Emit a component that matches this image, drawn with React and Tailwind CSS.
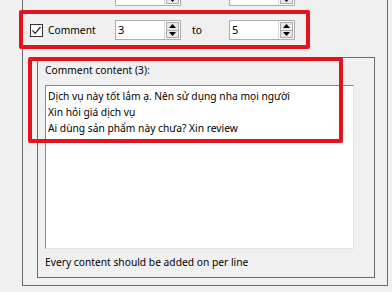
import React from "react";

function Spin({ value }) {
  return (
    <div className="flex h-[20px] w-[66px] border border-[#abadb3] bg-white">
      <div className="flex-1 pl-[2px] text-[11px] leading-[18px] text-black">{value}</div>
      <div className="flex w-[16px] flex-col border-l border-[#d9d9d9] p-[1px]">
        <div className="flex flex-1 items-center justify-center border border-[#acacac] bg-[#e9e9e9]">
          <svg width="7" height="4" viewBox="0 0 7 4"><path d="M3.5 0 L7 4 L0 4 Z" fill="#000" /></svg>
        </div>
        <div className="flex flex-1 items-center justify-center border border-t-0 border-[#acacac] bg-[#e9e9e9]">
          <svg width="7" height="4" viewBox="0 0 7 4"><path d="M0 0 L7 0 L3.5 4 Z" fill="#000" /></svg>
        </div>
      </div>
    </div>
  );
}

function Check({ checked }) {
  return (
    <div className="flex h-[13px] w-[13px] items-center justify-center border border-[#333] bg-white">
      {checked && (
        <svg width="11" height="11" viewBox="0 0 11 11">
          <path d="M1.5 5.5 L4.2 8.3 L9.5 2" fill="none" stroke="#222" strokeWidth="1.2" />
        </svg>
      )}
    </div>
  );
}

export default function App() {
  return (
    <div
      className="relative h-[292px] w-[392px] overflow-hidden bg-[#f0f0f0] text-[10.25px] text-black"
      style={{ fontFamily: '"Noto Sans", sans-serif' }}
    >
      <div className="ml-[22px] mt-[-14px] flex h-[300px] w-[366px] flex-col border-x border-b border-[#6a6a6a]">
        <div className="flex h-[20px] items-center pl-[7px]">
          <div className="flex w-[85px] items-center gap-[5px]">
            <div className="mt-[-8px]"><Check checked={false} /></div>
          </div>
          <Spin value="" />
          <div className="w-[48px]" />
          <Spin value="" />
        </div>
        <div className="mt-[14px] flex h-[20px] items-center pl-[7px]">
          <div className="flex w-[85px] items-center gap-[5px]">
            <Check checked />
            <span className="leading-[16px]">Comment</span>
          </div>
          <Spin value="3" />
          <div className="w-[48px] pl-[11px] leading-[16px]">to</div>
          <Spin value="5" />
        </div>
        <div className="ml-[14px] mt-[17px] flex h-[221px] w-[338px] flex-col border border-[#6a6a6a] pl-[7px]">
          <div className="mt-[4px] leading-[16px]">Comment content (3):</div>
          <div className="mt-[7px] h-[164px] w-[309px] border border-[#828790] border-b-[#e3e3e3] border-r-[#e3e3e3] bg-white pl-[2px] pt-[2px] leading-[16px]">
            <div>Dịch vụ này tốt lắm ạ. Nên sử dụng nha mọi người</div>
            <div>Xin hỏi giá dịch vụ</div>
            <div>Ai dùng sản phẩm này chưa? Xin review</div>
          </div>
          <div className="mt-[5px] leading-[16px]">Every content should be added on per line</div>
        </div>
      </div>
      <div className="absolute left-[19px] top-[10px] h-[39px] w-[291px] rounded-[2px] border-[4px] border-[#e2131c]" />
      <div className="absolute left-[28px] top-[57px] h-[86px] w-[315px] rounded-[2px] border-[4px] border-[#e2131c]" />
    </div>
  );
}
